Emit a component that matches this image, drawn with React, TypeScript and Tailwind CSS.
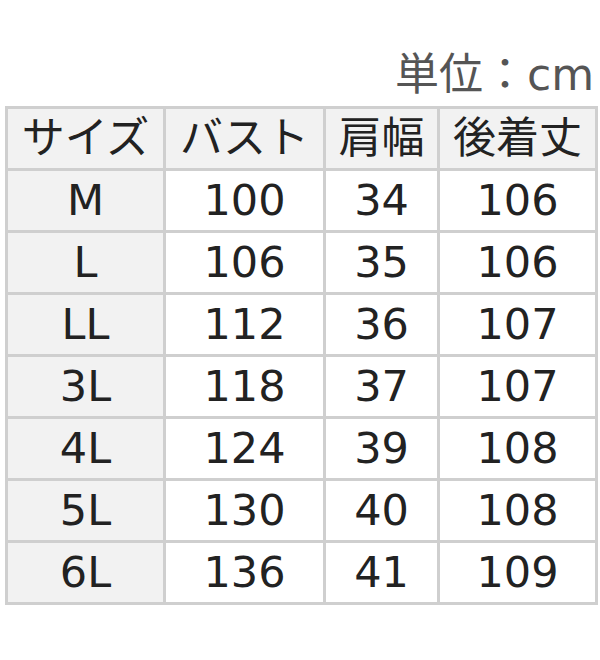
const rows: [string, string, string, string][] = [
  ["M", "100", "34", "106"],
  ["L", "106", "35", "106"],
  ["LL", "112", "36", "107"],
  ["3L", "118", "37", "107"],
  ["4L", "124", "39", "108"],
  ["5L", "130", "40", "108"],
  ["6L", "136", "41", "109"],
];

const headers = ["サイズ", "バスト", "肩幅", "後着丈"];

const font = "font-['DejaVu_Sans','Noto_Sans_CJK_JP',sans-serif]";

export default function App() {
  return (
    <div className={`h-[660px] w-[600px] bg-white ${font}`}>
      <div className="h-[106px] pt-[49px] pr-[6px] text-right text-[44px] leading-[52px] text-[#555]">
        単位：cm
      </div>
      <table className="ml-[5px] w-[590px] table-fixed border-collapse text-center text-[43px] text-[#222]">
        <colgroup>
          <col className="w-[158px]" />
          <col className="w-[160px]" />
          <col className="w-[114px]" />
          <col className="w-[158px]" />
        </colgroup>
        <thead>
          <tr className="h-[62px] bg-[#f2f2f2]">
            {headers.map((h) => (
              <th key={h} className="border-[3px] border-[#cfcfcf] p-0 font-normal leading-none">
                {h}
              </th>
            ))}
          </tr>
        </thead>
        <tbody>
          {rows.map((r) => (
            <tr key={r[0]} className="h-[62px]">
              <td className="border-[3px] border-[#cfcfcf] bg-[#f2f2f2] p-0 leading-none">{r[0]}</td>
              <td className="border-[3px] border-[#cfcfcf] p-0 leading-none">{r[1]}</td>
              <td className="border-[3px] border-[#cfcfcf] p-0 leading-none">{r[2]}</td>
              <td className="border-[3px] border-[#cfcfcf] p-0 leading-none">{r[3]}</td>
            </tr>
          ))}
        </tbody>
      </table>
    </div>
  );
}
